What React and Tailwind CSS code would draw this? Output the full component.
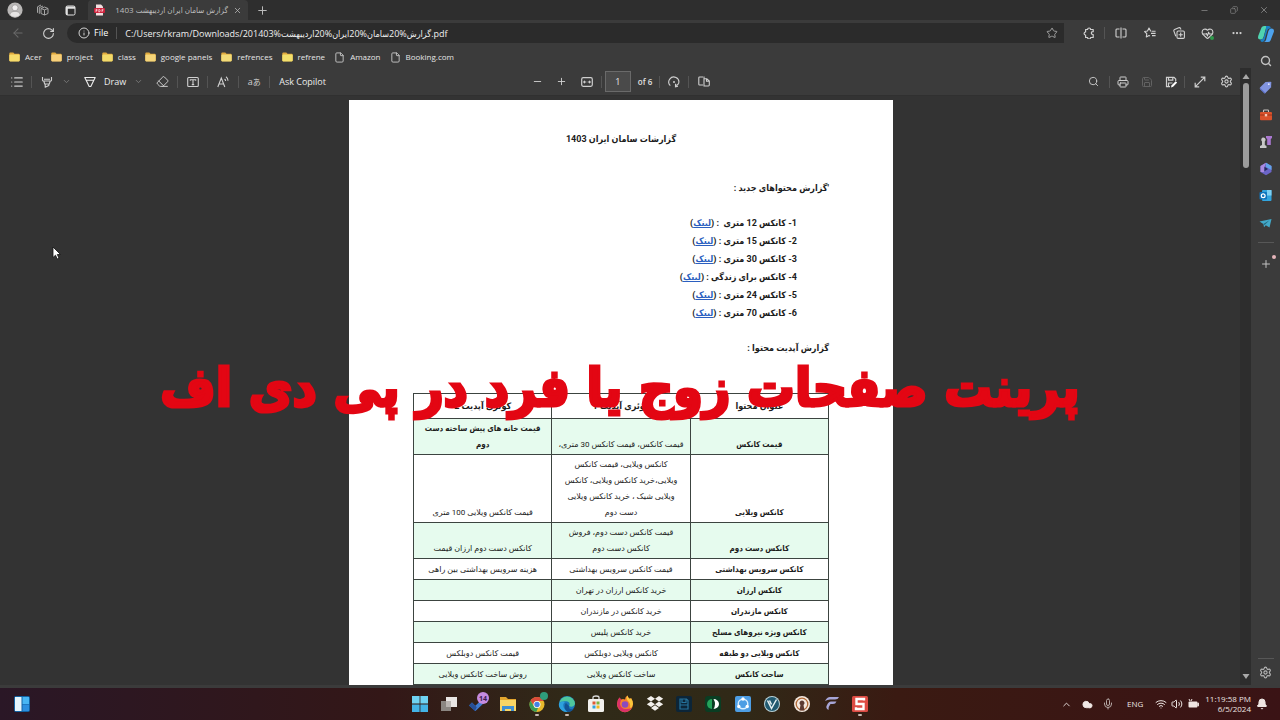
import React from "react";
import {
  ArrowLeft, RotateCw, Info, Star, Search, Printer, Save, Settings,
  Minus, Plus, X, Copy, List, ChevronDown, ChevronUp, Eraser, HeartPulse, Ellipsis,
  File, Mic, Wifi, Volume2, Cloud, Bell,
} from "lucide-react";

const latin = "font-['Open_Sans','DejaVu_Sans_Condensed','DejaVu_Sans',sans-serif]";
const persian = "font-[Roboto,'DejaVu_Sans_Condensed','DejaVu_Sans',sans-serif]";
const persianWide = "font-[Roboto,'DejaVu_Sans',sans-serif]";

function IconButton({ label, className = "w-6", children }) {
  return (
    <button type="button" aria-label={label} className={`flex h-full shrink-0 items-center justify-center ${className}`}>
      {children}
    </button>
  );
}

function Divider({ className = "" }) {
  return <span className={`h-3 w-px shrink-0 bg-[#545454] ${className}`} />;
}

function Avatar() {
  return (
    <svg width="16" height="16" viewBox="0 0 16 16">
      <circle cx="8" cy="8" r="7.6" fill="#b9b7b6" />
      <circle cx="8" cy="5.8" r="3" fill="#f0eeee" stroke="#8d8a89" strokeWidth=".6" />
      <path d="M2.700 13c.5-2.600 2.500-3.600 5.300-3.600s4.800 1 5.300 3.600A7.500 7.500 0 0 1 8 15.400 7.500 7.500 0 0 1 2.700 13z" fill="#e6e4e3" stroke="#8d8a89" strokeWidth=".5" />
    </svg>
  );
}

function TitleBar() {
  return (
    <header className="flex h-5 shrink-0 items-stretch bg-[#2e2e2e] text-[#bdbdbd]">
      <IconButton label="Profile" className="ml-0.5 w-[26px]"><Avatar /></IconButton>
      <IconButton label="Workspaces" className="w-7">
        <svg width="13" height="13" viewBox="0 0 13 13" fill="none" stroke="#a5a5a5" strokeWidth="1">
          <path d="M5 4.500 8.500 3 12 4.500v5L8.500 11 5 9.500zM5 4.500l3.500 1.300L12 4.500M8.500 5.800V11M3.300 9.800V3.600L7 2M1.500 8.800V2.800L5 1" />
        </svg>
      </IconButton>
      <IconButton label="Tab actions" className="w-7">
        <svg width="11" height="11" viewBox="0 0 11 11">
          <rect x="1" y="1" width="9" height="9" rx="1.500" fill="none" stroke="#e2e2e2" />
          <path d="M1 1.500h9v2.300H1zM1 3h1.800v7H1z" fill="#e2e2e2" />
        </svg>
      </IconButton>
      <div className="ml-1 flex w-40 items-center rounded-t bg-[#3b3b3b] pl-1.5">
        <svg width="11" height="12" viewBox="0 0 11 12" className="shrink-0">
          <path d="M2 .5h5l2 2V11.500H2z" fill="#f4dfe1" />
          <rect x="0" y="4" width="11" height="5" rx="1" fill="#d0213c" />
          <path d="M2 8V5.300h1q.8.7 0 1.400H2M4.800 5.300V8q1.600-.2 1.400-1.400-.1-1.200-1.400-1.300M8 8V5.300h1.500M8 6.600h1.200" fill="none" stroke="#fff" strokeWidth=".6" />
        </svg>
        <span dir="rtl" className={`flex-1 whitespace-nowrap text-[8px] leading-4 ${latin}`}>گزارش سامان ایران اردیبهشت 1403</span>
        <IconButton label="Close tab" className="mr-0.5 w-[18px]"><X size={9} /></IconButton>
      </div>
      <IconButton label="New tab" className="w-7"><Plus size={13} strokeWidth={1.800} /></IconButton>
      <div className="ml-auto flex pr-px text-[#8a8a8a]">
        <IconButton label="Minimize" className="w-[30px]"><Minus size={9} /></IconButton>
        <IconButton label="Restore" className="w-[30px]"><Copy size={8} className="-scale-x-100" /></IconButton>
        <IconButton label="Close" className="w-[30px]"><X size={10} /></IconButton>
      </div>
    </header>
  );
}

function AddressBar() {
  return (
    <div className="flex h-[26px] shrink-0 items-center pl-[3px] text-[#d2d2d2]">
      <IconButton label="Back" className="w-[30px] text-[#6a6a6a]"><ArrowLeft size={14} strokeWidth={1.800} /></IconButton>
      <IconButton label="Refresh" className="w-[30px]"><RotateCw size={13} /></IconButton>
      <div className="ml-1 mr-2.5 flex h-5 min-w-0 flex-1 items-center rounded-l-full bg-[#2b2b2b] pl-[11px]">
        <Info size={12} className="shrink-0" />
        <label htmlFor="url" className={`ml-1 text-[9px] font-medium text-white ${latin}`}>File</label>
        <Divider className="ml-2" />
        <input id="url" dir="ltr" defaultValue="C:/Users/rkram/Downloads/گزارش%20سامان%20ایران%20اردیبهشت%201403.pdf"
          className={`ml-2 h-5 min-w-0 flex-1 bg-transparent text-[9px] font-medium text-[#f0f0f0] outline-none ${latin}`} />
        <IconButton label="Add to favorites" className="w-6"><Star size={12} className="text-[#a0a0a0]" /></IconButton>
      </div>
      <IconButton label="Extensions" className="w-[29px]">
        <svg width="12" height="12" viewBox="0 0 12 12" fill="none" stroke="currentColor" strokeWidth="1.200" strokeLinejoin="round">
          <path d="M2.600 2.500h2a1.500 1.500 0 0 1 3 0h2.600v2.200H9.700a1.400 1.400 0 0 0 0 2.800h.5v3H7.600a1.500 1.500 0 0 1-3 0h-2V8a1.500 1.500 0 0 1 0-3z" />
        </svg>
      </IconButton>
      <Divider className="mx-px" />
      <IconButton label="Split screen" className="w-[29px]">
        <svg width="12" height="12" viewBox="0 0 12 12" fill="none" stroke="currentColor" strokeWidth="1.100">
          <path d="M4.500 2H1.800A1 1 0 0 0 1 3v6a1 1 0 0 0 .8 1h2.700M7.500 2h2.700A1 1 0 0 1 11 3v6a1 1 0 0 1-.8 1H7.500M6 .5v11" />
        </svg>
      </IconButton>
      <IconButton label="Favorites" className="w-[29px]">
        <svg width="12" height="12" viewBox="0 0 12 12" fill="none" stroke="currentColor" strokeWidth="1.100" strokeLinejoin="round">
          <path d="M7.500 4.200 6.600 4 5 1 3.500 4 .6 4.500l2.200 2.200L2.300 10 5 8.600l1 .5M8 4.200h3.600M7 6.400h4.600M8 8.600h3.600" />
        </svg>
      </IconButton>
      <IconButton label="Collections" className="w-[29px]">
        <svg width="12" height="12" viewBox="0 0 12 12" fill="none" stroke="currentColor" strokeWidth="1.100">
          <rect x="4" y="4" width="7.400" height="7.400" rx="1.200" />
          <path d="M7.700 5.600v4.200M5.600 7.700h4.200M2.800 9.300 .9 4.100a1.300 1.300 0 0 1 .7-1.600L5.800.8a1.300 1.300 0 0 1 1.700.7L8 2.600" />
        </svg>
      </IconButton>
      <IconButton label="Browser essentials" className="w-[29px]">
        <span className="relative">
          <HeartPulse size={13} />
          <span className="absolute bottom-0 right-0 size-1 rounded-full bg-[#2f9a4b]" />
        </span>
      </IconButton>
      <IconButton label="Settings and more" className="w-[29px]"><Ellipsis size={12} strokeWidth={2.500} /></IconButton>
    </div>
  );
}

const favorites = [
  ["Acer", "#f6dc6c"], ["project", "#f7d07a"], ["class", "#f2da6a"], ["google panels", "#f5d579"],
  ["refrences", "#f3dc78"], ["refrene", "#f3e06c"], ["Amazon", null], ["Booking.com", null],
];

function FavoritesBar() {
  return (
    <nav className="flex h-[22px] shrink-0 items-center gap-[9px] pl-[9px]">
      {favorites.map(([name, color]) => (
        <a key={name} href="#" className={`flex items-center gap-[5px] text-[8px] leading-4 text-[#e6e6e6] ${latin}`}>
          {color ? (
            <svg width="11" height="10" viewBox="0 0 11 10">
              <path d="M.3 1.600Q.3.600 1.300.600h3l1.200 1.200h4.300q.9 0 .9.900v5.600q0 1-1 1H1.300q-1 0-1-1z" fill="#e0a93c" />
              <rect x=".3" y="2.600" width="10.400" height="6.800" rx=".8" fill={color} />
            </svg>
          ) : <File size={11} className="text-[#c8c8c8]" />}
          {name}
        </a>
      ))}
    </nav>
  );
}

function PenIcon({ highlighter }) {
  return (
    <svg width="12" height="12" viewBox="0 0 12 12" fill="none" stroke="currentColor" strokeWidth="1.100" strokeLinejoin="round">
      {highlighter ? (
        <path d="M1.500 1v3.200q0 .8 1 .8h7q1 0 1-.8V1M2.800 5l.9 3h4.600l.9-3M4.200 8v3.300L7.800 9.500V8M3 3.200h6" />
      ) : (
        <path d="M.8 1.500h10.400L6.800 10.500H5.200zM2.200 4.200h7.600" />
      )}
    </svg>
  );
}

function PdfToolbar() {
  return (
    <div className="flex h-7 shrink-0 items-center border-b border-[#303030] text-[#cfcfcf]">
      <div className="flex h-full flex-1 items-center pl-1">
        <IconButton label="Contents" className="w-[26px]"><List size={14} /></IconButton>
        <Divider className="mx-px" />
        <IconButton label="Highlight" className="w-[27px]"><PenIcon highlighter /></IconButton>
        <IconButton label="Highlight options" className="w-3 text-[#858585]"><ChevronDown size={9} /></IconButton>
        <button type="button" className={`ml-3 flex items-center gap-2 text-[9px] font-medium text-[#ededed] ${latin}`}><PenIcon />Draw</button>
        <IconButton label="Draw options" className="ml-1.5 w-3 text-[#858585]"><ChevronDown size={9} /></IconButton>
        <IconButton label="Erase" className="ml-1 w-7"><Eraser size={13} strokeWidth={1.800} /></IconButton>
        <Divider className="mx-px" />
        <IconButton label="Add text" className="w-[27px]">
          <svg width="12" height="12" viewBox="0 0 12 12" fill="none" stroke="currentColor" strokeWidth="1.100">
            <rect x=".7" y="1.500" width="10.600" height="9" rx="1" /><path d="M3.300 4.800V3.800h5.400v1M6 3.800v5M4.800 8.600h2.400" />
          </svg>
        </IconButton>
        <Divider className="mx-px" />
        <IconButton label="Read aloud" className="w-7">
          <svg width="12" height="12" viewBox="0 0 12 12" fill="none" stroke="currentColor" strokeWidth="1.100">
            <path d="M.8 11 4.300 2l3.500 9M2 8h4.600M7.600 3q1 .7 1 2M9 .8q2 1.400 2 4" />
          </svg>
        </IconButton>
        <Divider className="mx-px" />
        <IconButton label="Translate" className={`w-7 ${latin}`}><span className="text-[9px] leading-3">a</span><span className="font-['Noto_Sans_CJK_JP',sans-serif] text-[8px] leading-3">あ</span></IconButton>
        <Divider className="mx-px" />
        <button type="button" className={`ml-2 text-[9px] font-medium text-[#ededed] ${latin}`}>Ask Copilot</button>
      </div>
      <div className="flex h-full items-center pl-0.5">
        <IconButton label="Zoom out" className="w-6"><Minus size={11} /></IconButton>
        <IconButton label="Zoom in" className="w-6"><Plus size={11} /></IconButton>
        <IconButton label="Fit to width" className="w-[26px]">
          <svg width="12" height="10" viewBox="0 0 12 10"><rect x=".7" y=".7" width="10.600" height="8.600" rx="1.500" fill="none" stroke="currentColor" strokeWidth="1.200" /><path d="M1.800 5 4 3.300v1.200h1.300v1H4v1.200zM10.200 5 8 3.300v1.200H6.700v1H8v1.200z" fill="currentColor" /></svg>
        </IconButton>
        <Divider className="mx-px" />
        <input aria-label="Page number" defaultValue="1" className={`ml-0.5 h-[21px] w-[26px] border border-[#6a6a6a] bg-[#4a4a4a] text-center text-[9px] text-[#e8e8e8] outline-none ${latin}`} />
        <span className={`ml-[7px] text-[8px] font-semibold text-[#e0e0e0] ${latin}`}>of 6</span>
        <Divider className="ml-[7px]" />
        <IconButton label="Rotate" className="w-7">
          <svg width="12" height="12" viewBox="0 0 12 12" fill="none" stroke="currentColor" strokeWidth="1.100"><path d="M2.300 9.600A5 5 0 1 1 10.600 7.500M8 9.500q1.800-.5 2.600-2M7.500 7.800v3l2.500-.5" /><circle cx="6" cy="6" r="1" fill="currentColor" stroke="none" /></svg>
        </IconButton>
        <Divider />
        <IconButton label="Page view" className="w-[29px]">
          <svg width="12" height="11" viewBox="0 0 12 11" fill="none" stroke="currentColor" strokeWidth="1.100"><path d="M5 1H1.600Q.8 1 .8 1.800v6.400Q.8 9 1.600 9H5M6 .5v9.500h4.400q.9 0 .9-.9V5L8.800 2.800H6M8.500 3v2.300H11" /></svg>
        </IconButton>
      </div>
      <div className="flex h-full flex-1 items-center justify-end pr-0.5">
        <IconButton label="Find" className="w-[29px]"><Search size={11} /></IconButton>
        <Divider className="mx-px" />
        <IconButton label="Print" className="w-6"><Printer size={12} /></IconButton>
        <IconButton label="Save" className="w-6 text-[#626262]"><Save size={12} /></IconButton>
        <IconButton label="Save as" className="w-6">
          <svg width="12" height="12" viewBox="0 0 12 12" fill="none" stroke="currentColor" strokeWidth="1.200"><path d="M5 10.600H1.500V1.400H9l1.700 1.700v2M3.500 1.400v2.800h4.300V1.400M3.500 10.600V7h4" /><path d="m6 11.500.6-2.300 4-4 1.500 1.500-4 4z" fill="#fff" stroke="none" /></svg>
        </IconButton>
        <Divider className="mx-px" />
        <IconButton label="Full screen" className="w-7">
          <svg width="12" height="12" viewBox="0 0 12 12" fill="none" stroke="currentColor" strokeWidth="1.200"><path d="M1.200 10.800 10.800 1.200M6.800 1.200h4v4M1.200 6.800v4h4" /></svg>
        </IconButton>
        <IconButton label="PDF settings" className="w-6"><Settings size={13} /></IconButton>
      </div>
    </div>
  );
}

const links = ["1- کانکس 12 متری  :", "2- کانکس 15 متری :", "3- کانکس 30 متری :", "4- کانکس برای زندگی :", "5- کانکس 24 متری :", "6- کانکس 70 متری :"];

const rows = [
  ["قیمت کانکس", ["قیمت کانکس، قیمت کانکس 30 متری،"], ["قیمت خانه های پیش ساخته دست", "دوم"], "h-9"],
  ["کانکس ویلایی", ["کانکس ویلایی، قیمت کانکس", "ویلایی،خرید کانکس ویلایی، کانکس", "ویلایی شیک ، خرید کانکس ویلایی", "دست دوم"], ["قیمت کانکس ویلایی 100 متری"], "h-[68px]"],
  ["کانکس دست دوم", ["قیمت کانکس دست دوم، فروش", "کانکس دست دوم"], ["کانکس دست دوم ارزان قیمت"], "h-9"],
  ["کانکس سرویس بهداشتی", ["قیمت کانکس سرویس بهداشتی"], ["هزینه سرویس بهداشتی بین راهی"], "h-[21px]"],
  ["کانکس ارزان", ["خرید کانکس ارزان در تهران"], [], "h-[21px]"],
  ["کانکس مازندران", ["خرید کانکس در مازندران"], [], "h-[21px]"],
  ["کانکس ویژه نیروهای مسلح", ["خرید کانکس پلیس"], [], "h-[21px]"],
  ["کانکس ویلایی دو طبقه", ["کانکس ویلایی دوبلکس"], ["قیمت کانکس دوبلکس"], "h-[21px]"],
  ["ساحت کانکس", ["ساخت کانکس ویلایی"], ["روش ساخت کانکس ویلایی"], "h-[21px]"],
];

const cell = "border border-[#3c4440] p-px text-center align-bottom whitespace-nowrap";

function Lines({ items }) {
  return items.map((t) => <span key={t} className="block">{t}</span>);
}

function DocumentPage() {
  return (
    <article dir="rtl" className={`w-[544px] shrink-0 bg-white px-16 pt-[30px] text-[9px] leading-[18px] text-[#1c1c1c] ${persian}`}>
      <h1 className="text-center font-bold">گزارشات سامان ایران 1403</h1>
      <h2 className="mt-[31px] font-bold">'گزارش محتواهای جدید :</h2>
      <ul className="mt-[17px] pr-8 font-bold">
        {links.map((t) => (
          <li key={t} className="whitespace-pre">{t} (<a href="#" className="text-[#2b5fc0] underline">لینک</a>)</li>
        ))}
      </ul>
      <h2 className="mt-[17px] font-bold">گزارش آپدیت محتوا :</h2>
      <table className="mt-9 w-full table-fixed border-collapse text-[8px] leading-4">
        <thead>
          <tr className="h-[25px]">
            {["عنوان محتوا", "کوئری آپدیت 1", "کوئری آپدیت 2"].map((t) => <th key={t} className="border border-[#3c4440] p-px align-middle text-[9px] font-bold">{t}</th>)}
          </tr>
        </thead>
        <tbody>
          {rows.map(([name, a, b, height], i) => (
            <tr key={name} className={`${height} ${i % 2 === 0 ? "bg-[#e6fbee]" : "bg-white"}`}>
              <th className={`${cell} font-bold`}>{name}</th>
              <td className={`${cell} ${persianWide}`}><Lines items={a} /></td>
              <td className={`${cell} ${i === 0 ? "font-bold" : persianWide}`}><Lines items={b} /></td>
            </tr>
          ))}
        </tbody>
      </table>
    </article>
  );
}

function SideButton({ label, children }) {
  return <button type="button" aria-label={label} className="flex h-[27px] w-full shrink-0 items-center justify-center">{children}</button>;
}

function SideBar() {
  return (
    <aside className="flex w-[29px] shrink-0 flex-col items-center bg-[#3b3b3b]">
      <SideButton label="Copilot">
        <svg width="18" height="18" viewBox="0 0 18 18">
          <path d="M4.500 2.500Q5.200 1 7 1h4.500Q9.700 1 9 3L6.600 12q-.6 2.500-3 2.500Q.3 14.500 1.200 11z" fill="#4fd3b0" />
          <path d="M13.500 15.500Q12.800 17 11 17H6.500Q8.300 17 9 15l2.400-9q.6-2.500 3-2.500 3.300 0 2.400 3.500z" fill="#4da3ee" />
          <path d="M9 1h3q1.600 0 2 2.500H12.500q-1.500 0-2.200 2L8.200 13q-.8 4-3.200 4Q3.600 17 3.300 14.500q2.900.3 3.600-2.500L9 4z" fill="#1a7fc4" />
        </svg>
      </SideButton>
      <SideButton label="Search"><Search size={12} strokeWidth={2.800} className="text-[#c2c2c2]" /></SideButton>
      <SideButton label="Shopping">
        <svg width="13" height="13" viewBox="0 0 13 13"><path d="m6.500 1 5-.2q.8 0 .8.800l-.2 4.700-5.600 5.800q-.7.600-1.400 0L1 8q-.6-.7 0-1.400z" fill="#8194e0" /><path d="m1 6.800 5.500 5.300q-.7.600-1.400 0L1 8z" fill="#5b6fc8" /><circle cx="9.800" cy="3.200" r=".9" fill="#e5eaff" /></svg>
      </SideButton>
      <SideButton label="Tools">
        <svg width="14" height="12" viewBox="0 0 14 12"><path d="M4.500 3V1.700q0-.7.7-.7h3.600q.7 0 .7.700V3" fill="none" stroke="#c9c3c0" strokeWidth="1.100" /><rect x="1" y="3" width="12" height="8.200" rx="1" fill="#d9522c" /><path d="M1 6h12" stroke="#9d3216" /><rect x="5.800" y="5" width="2.400" height="2.400" fill="#f5c7b2" /></svg>
      </SideButton>
      <SideButton label="Games">
        <svg width="14" height="14" viewBox="0 0 14 14"><path d="M7 1h6v2l-1.200 1v6H8.200V4L7 3z" fill="#a978d0" /><path d="M4.500 2.500a2.200 2.200 0 0 1 1.300 3.900V10l1.700 1v2H1v-2l2-1V6.400a2.200 2.200 0 0 1 1.500-3.900z" fill="#c8c8c8" /></svg>
      </SideButton>
      <SideButton label="Microsoft 365">
        <svg width="14" height="14" viewBox="0 0 14 14"><path d="M7 .8 12.500 4v6L7 13.200 1.500 10V4z" fill="#6b65c8" /><path d="M7 .8 12.500 4v4L7 5z" fill="#62a4e8" /><path d="M1.500 10V4L7 .8 5 6v4z" fill="#a98ae0" /><path d="M5.500 4.800 9 7 5.500 9.200z" fill="#242b58" /></svg>
      </SideButton>
      <SideButton label="Outlook">
        <svg width="13" height="13" viewBox="0 0 13 13"><rect x="3" y="1" width="9.500" height="11" rx="1" fill="#31a4de" /><path d="M8 1h4.500v5.500H8z" fill="#7cd0f3" /><rect x=".5" y="3" width="7.500" height="7.500" rx="1" fill="#0f74bb" /><circle cx="4.200" cy="6.800" r="1.900" fill="none" stroke="#fff" strokeWidth="1.200" /></svg>
      </SideButton>
      <SideButton label="Telegram">
        <svg width="13" height="12" viewBox="0 0 13 12"><path d="M.5 4.500 12.500 2l-2 8.500L6.800 8.200 5 10.200 4.400 7z" fill="#42a9c9" /><path d="m4.400 7 6.100-3.700L5.500 8z" fill="#24657b" /></svg>
      </SideButton>
      <span className="mt-1.5 h-px w-4 shrink-0 bg-[#575757]" />
      <div className="relative mt-[7px] w-full">
        <SideButton label="Customize"><Plus size={12} className="text-[#c2c2c2]" /></SideButton>
        <span className="absolute right-1 top-[5px] size-1 rounded-full bg-[#e6b5ba]" />
      </div>
      <span className="mt-auto h-px w-4 shrink-0 bg-[#575757]" />
      <div className="w-full pb-0.5"><SideButton label="Sidebar settings"><Settings size={13} className="text-[#b8b8b8]" /></SideButton></div>
    </aside>
  );
}

function ScrollBar() {
  return (
    <div className="flex w-[11px] shrink-0 flex-col items-center bg-[#2d2d2d] py-1.5">
      <svg width="8" height="5" viewBox="0 0 8 5"><path d="M4 0 7.500 5H.5z" fill="#a8a8a8" /></svg>
      <div className="mt-1 h-[85px] w-1.5 rounded-full bg-[#9b9b9b]" />
      <svg width="8" height="5" viewBox="0 0 8 5" className="mt-auto"><path d="M4 5 .5 0h7z" fill="#a8a8a8" /></svg>
    </div>
  );
}

const apps = [
  ["Start", <><path d="M1 1h7.600v7.600H1zM9.400 1H17v7.600H9.400z" fill="#6fd3f3" /><path d="M1 9.400h7.600V17H1zM9.400 9.400H17V17H9.400z" fill="#43b3e6" /></>],
  ["Task view", <><path d="M1 6h10v10H1z" fill="#8b8682" /><path d="M6 2h11v10H6z" fill="#e9e6e4" /><path d="M6 6h5v6H6z" fill="#b9b4b1" /></>],
  ["To Do", <><path d="m0 10.500 3-3 3.300 3.200L14 3.500l2.500 3L6.500 16z" fill="#3f7ad0" /><path d="m0 10.500 3-3 4.800 4.700-2 3.800z" fill="#274f96" /></>],
  ["File Explorer", <><path d="M1 2h6l2 2h8v12H1z" fill="#e3a52e" /><path d="M1 5h16v11H1z" fill="#f8d565" /><path d="M3 11h12v5h-3v-2H6v2H3z" fill="#3f8fd3" /></>],
  ["Chrome", <><circle cx="9" cy="9.500" r="7.500" fill="#e8b92c" /><path d="M2.500 5.700A7.500 7.500 0 0 1 15.500 6H9a3.500 3.500 0 0 0-3.400 4.500z" fill="#da4b3b" /><path d="M2.500 5.700 6 11.500a3.500 3.500 0 0 0 4 1.400L8.300 17A7.500 7.500 0 0 1 2.500 5.700z" fill="#3a9c56" /><circle cx="9" cy="9.500" r="3.500" fill="#fff" /><circle cx="9" cy="9.500" r="2.700" fill="#4582e4" /></>],
  ["Edge", <><circle cx="9" cy="9" r="8" fill="#1a78bd" /><path d="M1.200 8A8 8 0 0 1 17 8.500c0 3-4 4-6 2.500 2-3-1-5-4-4.700C4.500 6.500 2 7 1.200 8z" fill="#4fc79d" /><path d="M7 7c-3 2-2 7 2.500 9.900C3 17.500-.3 11 1.200 8 2.500 6.500 5 6 7 7z" fill="#2ea1dd" /><path d="M11 11c-1 3 2 4 5 2.500-1.500 2.500-4 3.500-6.500 3.300C6 14.500 6 10 8 8z" fill="#135394" /></>],
  ["Store", <><path d="M6 5V2.500Q6 1 9 1t3 1.500V5" fill="none" stroke="#dcdcdc" strokeWidth="1.300" /><rect x="1" y="4" width="16" height="13" rx="1.500" fill="#f2f1ee" /><path d="M5.500 6.500h3v3h-3z" fill="#df5a35" /><path d="M9.500 6.500h3v3h-3z" fill="#7cb342" /><path d="M5.500 10.500h3v3h-3z" fill="#31a1dc" /><path d="M9.500 10.500h3v3h-3z" fill="#f2b91f" /></>],
  ["Firefox", <><path d="M9 17.200A8 8 0 0 1 1 9q0-4 2.500-6.500L5 4.500q2-1 4 0Q9 2 11.500.5q.3 2 2.500 3.500l1-1Q17 6 17 9a8 8 0 0 1-8 8.200z" fill="#f5802d" /><path d="M11.500.5q.3 2 2.500 3.500l1-1Q17 6 17 9q-.5 3-3 4 1-5-2.500-7.500Q9.500 3 11.500.5z" fill="#fbc63b" /><path d="M1 9q0-4 2.500-6.500L5 4.500 4 9q1 5 6 5 4 0 5.500-1Q13 17 9 17.200 2 16.500 1 9z" fill="#db3069" /><circle cx="9" cy="9.500" r="3.300" fill="#8a4ac0" /></>],
  ["Dropbox", <path d="M5 1 .8 3.800 5 6.600 9 3.800zM13 1 9 3.800l4 2.800 4.200-2.800zM.8 9.300 5 12l4-2.700-4-2.700zM13 6.600 9 9.300l4 2.700 4.200-2.700zM5 13l4 2.800 4-2.800-4-2.700z" fill="#f2efec" />],
  ["Save tool", <><rect x="1" y="1" width="16" height="16" rx="2" fill="#0c2538" /><path d="M5 4h6.500L13 5.500V14H5zM7 4v3.500h4V4M5 10h8" fill="none" stroke="#26739c" strokeWidth="1.200" /></>],
  ["Audio tool", <><rect x="1" y="1" width="16" height="16" rx="3" fill="#0a3d23" /><path d="M8 4a5 5 0 0 0 0 10z" fill="#24a35a" /><path d="M9.500 4a5.500 5 0 0 1 0 10q3-5 0-10z" fill="#fff" /></>],
  ["Share tool", <><rect x="1" y="1" width="16" height="16" rx="2" fill="#4d9ee4" /><circle cx="9" cy="9" r="4.800" fill="none" stroke="#d9efff" strokeWidth="1.400" /><g fill="#fff"><circle cx="9" cy="4" r="1.700" /><circle cx="4.800" cy="11.500" r="1.700" /><circle cx="13.200" cy="11.500" r="1.700" /></g></>],
  ["V tool", <><circle cx="9" cy="9" r="8" fill="#b9d3d9" /><circle cx="9" cy="9" r="7" fill="#215a70" /><path d="M4.500 5.500 8.500 13.500 13.500 4.500M6.500 5.500l2 4" fill="none" stroke="#e7f2f3" strokeWidth="1.500" /></>],
  ["VPN", <><circle cx="9" cy="9" r="8" fill="#f3e8df" /><circle cx="9" cy="9" r="5.800" fill="none" stroke="#b06a38" strokeWidth="1.300" /><path d="M9 5.500a2.500 2.500 0 0 1 1.500 4.500l1 5.500h-5l1-5.500A2.500 2.500 0 0 1 9 5.500z" fill="#5b3a32" /></>],
  ["F tool", <path d="M3 6q2-4 5-4h9q-1 2.500-4 2.500H8Q5.500 4.700 3 6zM5 10q1.500-3.500 4-3.500h5.500Q13.500 9 11 9H8.500Q6 12 6.500 15 3 13 5 10z" fill="#a7a5d6" />],
  ["Snagit", <><rect x="1" y="1" width="16" height="16" rx="1.500" fill="#de4b43" /><path d="M13 5.500V4H5.500v5h7v5H5v-1.800" fill="none" stroke="#fff" strokeWidth="2.400" /></>],
];

function TaskBar() {
  return (
    <footer className={`grid h-8 shrink-0 grid-cols-[1fr_auto_1fr] items-stretch bg-[linear-gradient(90deg,#2a1726_0%,#331717_30%,#302a18_45%,#302917_58%,#3a1a12_70%,#3a1315_100%)] text-[#ece4e1] ${latin}`}>
      <div className="flex items-center pl-3.5">
        <button type="button" aria-label="Widgets">
          <svg width="16" height="16" viewBox="0 0 16 16"><rect width="16" height="16" rx="2" fill="#1263a4" /><path d="M1 1h6.500v14H1z" fill="#e6f5fd" /><path d="M8.500 1H15v7H8.500z" fill="#48b6f4" /><path d="M8.500 8.500H15V15H8.500z" fill="#2c8fe0" /></svg>
        </button>
      </div>
      <div className="flex w-[470px]">
        {apps.map(([name, art], i) => (
          <button key={name} type="button" aria-label={name} className="relative flex flex-1 items-center justify-center">
            <svg width="18" height="18" viewBox="0 0 18 18">{art}</svg>
            {name === "To Do" && <span className="absolute right-1 top-1 flex size-3 items-center justify-center rounded-full bg-[#c58be0] text-[7px] font-bold leading-none text-[#3c1c50]">14</span>}
            {name === "Chrome" && <span className="absolute right-1 top-1 size-2 rounded-full bg-[#2e9c7b]" />}
            {[4, 5, 15].includes(i) && <span className="absolute bottom-1 h-0.5 w-1 rounded-full bg-[#c6b9b1]" />}
          </button>
        ))}
      </div>
      <div className="flex items-center justify-end pr-[11px]">
        <IconButton label="Show hidden icons" className="w-[21px]"><ChevronUp size={11} /></IconButton>
        <IconButton label="OneDrive" className="w-[21px]"><Cloud size={11} fill="#f1e8e5" /></IconButton>
        <IconButton label="Microphone" className="w-[21px] text-[#b5a8a5]"><Mic size={12} /></IconButton>
        <button type="button" className="ml-2 text-[8px]">ENG</button>
        <div className="ml-2.5 flex h-full">
          <IconButton label="Network" className="w-4"><Wifi size={12} /></IconButton>
          <IconButton label="Volume" className="w-4"><Volume2 size={12} /></IconButton>
          <IconButton label="Battery" className="w-4">
            <svg width="12" height="10" viewBox="0 0 12 10"><rect x="1.500" y="2.500" width="9" height="6" rx="1" fill="#efe5e2" /><path d="M10.800 4.200h1v2.600h-1zM2 0l1 2M5 0 4 2" stroke="#efe5e2" fill="#efe5e2" /></svg>
          </IconButton>
        </div>
        <div className="ml-1 text-right text-[8px] leading-[10px]"><div>11:19:58 PM</div><div>6/5/2024</div></div>
        <IconButton label="Notifications" className="ml-1 w-3.5"><Bell size={12} fill="#efe5e2" /></IconButton>
      </div>
    </footer>
  );
}

export default function App() {
  return (
    <div className="relative flex h-screen flex-col overflow-hidden bg-[#3b3b3b]">
      <TitleBar />
      <div className="flex min-h-0 flex-1">
        <div className="flex min-w-0 flex-1 flex-col">
          <AddressBar />
          <FavoritesBar />
          <div className="flex min-h-0 flex-1">
            <div className="flex min-w-0 flex-1 flex-col">
              <PdfToolbar />
              <main className="flex min-h-0 flex-1 justify-center overflow-hidden bg-[#333333] pl-0.5 pt-1">
                <DocumentPage />
              </main>
            </div>
            <ScrollBar />
          </div>
          <div className="h-[3px] shrink-0" />
        </div>
        <SideBar />
      </div>
      <TaskBar />
      <p dir="rtl" className="pointer-events-none absolute inset-x-0 top-[348px] whitespace-nowrap pr-10 text-center font-['DejaVu_Sans_Condensed','DejaVu_Sans',sans-serif] text-[53px] font-bold leading-[80px] text-[#e30613] [-webkit-text-stroke:3px_#e30613]">پرینت صفحات زوج یا فرد در پی دی اف</p>
      <svg width="9" height="14" viewBox="0 0 9 14" className="pointer-events-none absolute left-[52px] top-[246px]">
        <path d="M1 1v10.500l2.500-2.300L5.200 13l1.800-.8-1.700-3.700H8.500z" fill="#fff" stroke="#111" strokeWidth=".8" />
      </svg>
    </div>
  );
}
